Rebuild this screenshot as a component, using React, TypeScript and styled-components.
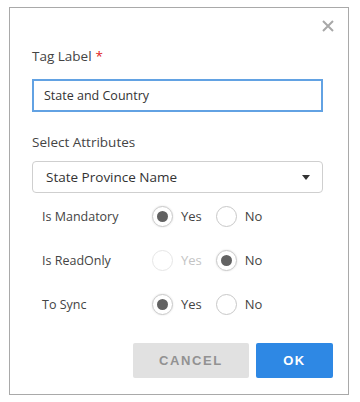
import React from 'react';
import styled, { createGlobalStyle } from 'styled-components';

const GlobalStyle = createGlobalStyle`
  body {
    margin: 0;
    background: #ffffff;
    font-family: "Open Sans", "Noto Sans", sans-serif;
  }
`;

const Dialog = styled.div`
  box-sizing: border-box;
  width: 340px;
  height: 388px;
  margin: 7px 0 0 9px;
  border: 1px solid #a9a9a9;
  background: #fff;
  padding: 0 25px 0 22px;
  display: flex;
  flex-direction: column;
`;

const CloseButton = styled.button`
  align-self: flex-end;
  margin: 11px -11px 0 0;
  width: 12px;
  height: 13px;
  padding: 0;
  border: none;
  background: none;
  display: flex;
  align-items: center;
  justify-content: center;
  cursor: pointer;
`;

const FieldLabel = styled.div<{ $top: number }>`
  margin-top: ${({ $top }) => $top}px;
  font-size: 13.5px;
  line-height: 18px;
  color: #444;
`;

const Required = styled.span`
  color: #e02020;
  margin-left: 4px;
`;

const TextInput = styled.input`
  box-sizing: border-box;
  margin-top: 14px;
  width: 291px;
  height: 33px;
  border: 2px solid #62a2e3;
  padding: 0 10px;
  font-family: inherit;
  font-size: 12.5px;
  color: #333;
  outline: none;
`;

const SelectBox = styled.div`
  box-sizing: border-box;
  margin-top: 10px;
  width: 291px;
  height: 32px;
  border: 1px solid #cfcfcf;
  border-radius: 4px;
  padding: 0 12px 0 13px;
  display: flex;
  align-items: center;
  justify-content: space-between;
  font-size: 13.5px;
  color: #333;
`;

const Caret = styled.span`
  width: 0;
  height: 0;
  border-left: 4px solid transparent;
  border-right: 4px solid transparent;
  border-top: 5px solid #333;
`;

const Options = styled.div`
  margin-top: 8px;
  display: flex;
  flex-direction: column;
  gap: 14px;
`;

const OptionRow = styled.div`
  display: flex;
  align-items: center;
  height: 30px;
  padding-left: 10px;
`;

const OptionName = styled.div`
  width: 110px;
  font-size: 12.5px;
  color: #444;
`;

const RadioGroup = styled.div`
  display: flex;
  align-items: center;
`;

const RadioItem = styled.label<{ $disabled?: boolean }>`
  display: flex;
  align-items: center;
  gap: 8px;
  margin-right: 14px;
  font-size: 13px;
  color: ${({ $disabled }) => ($disabled ? '#c4c4c4' : '#444')};
`;

const RadioCircle = styled.span<{ $checked?: boolean; $disabled?: boolean }>`
  box-sizing: border-box;
  width: 21px;
  height: 21px;
  border-radius: 50%;
  border: 1px solid ${({ $disabled }) => ($disabled ? '#e6e6e6' : '#c8c8c8')};
  box-shadow: ${({ $checked }) => ($checked ? '0 0 2px rgba(0,0,0,0.15)' : 'none')};
  display: flex;
  align-items: center;
  justify-content: center;
  &::after {
    content: '';
    display: ${({ $checked }) => ($checked ? 'block' : 'none')};
    width: 11px;
    height: 11px;
    border-radius: 50%;
    background: #626262;
  }
`;

const Footer = styled.div`
  margin: 24px -10px 0 0;
  display: flex;
  justify-content: flex-end;
  gap: 7px;
`;

const ActionButton = styled.button<{ $primary?: boolean }>`
  height: 35px;
  width: ${({ $primary }) => ($primary ? 77 : 116)}px;
  border: none;
  border-radius: 2px;
  background: ${({ $primary }) => ($primary ? '#2e88e4' : '#e1e1e1')};
  color: ${({ $primary }) => ($primary ? '#ffffff' : '#929292')};
  font-family: "Liberation Sans", Arial, sans-serif;
  font-weight: bold;
  font-size: 13px;
  letter-spacing: 1.6px;
  cursor: pointer;
`;

type Choice = 'yes' | 'no';

const rows: { name: string; value: Choice; disabledYes?: boolean }[] = [
  { name: 'Is Mandatory', value: 'yes' },
  { name: 'Is ReadOnly', value: 'no', disabledYes: true },
  { name: 'To Sync', value: 'yes' },
];

export default function App() {
  return (
    <>
      <GlobalStyle />
      <Dialog>
        <CloseButton aria-label="Close">
          <svg width="12" height="12" viewBox="0 0 12 12">
            <path d="M1 1 L11 11 M11 1 L1 11" stroke="#a8a8a8" strokeWidth="2" />
          </svg>
        </CloseButton>
        <FieldLabel $top={15}>
          Tag Label<Required>*</Required>
        </FieldLabel>
        <TextInput defaultValue="State and Country" />
        <FieldLabel $top={21}>Select Attributes</FieldLabel>
        <SelectBox>
          State Province Name
          <Caret />
        </SelectBox>
        <Options>
          {rows.map((row) => (
            <OptionRow key={row.name}>
              <OptionName>{row.name}</OptionName>
              <RadioGroup>
                <RadioItem $disabled={row.disabledYes}>
                  <RadioCircle $checked={row.value === 'yes'} $disabled={row.disabledYes} />
                  Yes
                </RadioItem>
                <RadioItem>
                  <RadioCircle $checked={row.value === 'no'} />
                  No
                </RadioItem>
              </RadioGroup>
            </OptionRow>
          ))}
        </Options>
        <Footer>
          <ActionButton>CANCEL</ActionButton>
          <ActionButton $primary>OK</ActionButton>
        </Footer>
      </Dialog>
    </>
  );
}
